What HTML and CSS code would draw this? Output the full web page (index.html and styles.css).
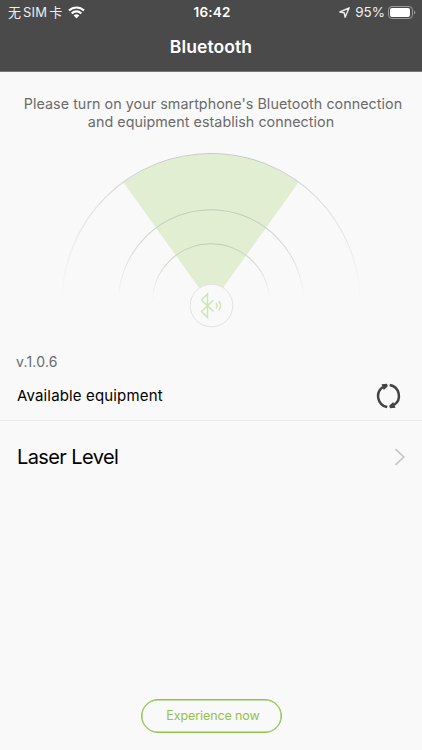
FILE: index.html
```html
<!DOCTYPE html>
<html lang="en">
<head>
    <meta charset="UTF-8">
    <meta name="viewport" content="width=device-width, initial-scale=1.0">
    <title>Bluetooth</title>
    <link rel="stylesheet" href="styles.css">
</head>
<body>
    <header class="header">
        <div class="status-bar">
            <div class="status-left">
                <span class="carrier">无<span class="sim">SIM</span>卡</span>
                <svg class="wifi" width="17" height="13" viewBox="0 0 17 13">
                    <g fill="none" stroke="#fff" stroke-width="2.1">
                        <path d="M1 4.6a10.7 10.7 0 0 1 15 0"/>
                        <path d="M3.7 7.4a6.8 6.8 0 0 1 9.6 0"/>
                    </g>
                    <path d="M8.5 12.4L5.7 9.6a4 4 0 0 1 5.6 0z" fill="#fff"/>
                </svg>
            </div>
            <span class="time">16:42</span>
            <div class="status-right">
                <svg width="11" height="11" viewBox="0 0 11 11">
                    <path d="M10.2 .8L.9 5l4.3.8.9 4.4z" fill="none" stroke="#eee" stroke-width="1.4" stroke-linejoin="round"/>
                </svg>
                <span class="percent">95%</span>
                <svg width="28" height="13" viewBox="0 0 28 13">
                    <rect x=".5" y=".5" width="24" height="12" rx="3.4" fill="none" stroke="#9b9b9b"/>
                    <rect x="2" y="2" width="20" height="9" rx="2" fill="#fff"/>
                    <path d="M26 4.5c1.8.6 1.8 3.4 0 4z" fill="#9b9b9b"/>
                </svg>
            </div>
        </div>
        <h1 class="title">Bluetooth</h1>
    </header>

    <main class="content">
        <div class="hint">
            <p>Please turn on your smartphone's Bluetooth connection</p>
            <p class="hint-end">and equipment establish connection</p>
        </div>

        <svg class="radar" width="422" height="200" viewBox="0 0 422 200">
            <defs>
                <linearGradient id="fade-lg" gradientUnits="userSpaceOnUse" x1="0" y1="13" x2="0" y2="160">
                    <stop offset="0" stop-color="#c4cabd"/>
                    <stop offset=".25" stop-color="#dadada"/>
                    <stop offset="1" stop-color="#f9f9f9"/>
                </linearGradient>
                <linearGradient id="fade-md" gradientUnits="userSpaceOnUse" x1="0" y1="69" x2="0" y2="160">
                    <stop offset="0" stop-color="#c0cab5"/>
                    <stop offset=".25" stop-color="#d0d5cb"/>
                    <stop offset="1" stop-color="#f9f9f9"/>
                </linearGradient>
                <linearGradient id="fade-sm" gradientUnits="userSpaceOnUse" x1="0" y1="103" x2="0" y2="160">
                    <stop offset="0" stop-color="#c0cab5"/>
                    <stop offset=".25" stop-color="#d0d5cb"/>
                    <stop offset="1" stop-color="#f9f9f9"/>
                </linearGradient>
            </defs>
            <path d="M211 164.500L123.500 42.500A149 149 0 0 1 298.500 42.500z" fill="#e1eed2"/>
            <g fill="none" stroke-width="1.1">
                <path d="M62 162.500a149 149 0 0 1 298 0" stroke="url(#fade-lg)"/>
                <path d="M118.500 162.200a92.500 92.500 0 0 1 185 0" stroke="url(#fade-md)"/>
                <path d="M152.500 162.200a58.500 58.500 0 0 1 117 0" stroke="url(#fade-sm)"/>
            </g>
            <circle cx="211.500" cy="165.500" r="21.300" fill="#f9f9f9" stroke="#e2e2e2"/>
            <g fill="none" stroke="#cfe5b4" stroke-width="1.500">
                <path d="M201.500 160l6-6v23.500l-6-6L213.500 160M201.500 160l12 11.500"/>
                <path d="M216 163q2 2.700 0 5.400M218.800 161q3.600 4.700 0 9.400"/>
            </g>
        </svg>

        <p class="version">v.1.0.6</p>

        <div class="section-head">
            <h2 class="section-title">Available equipment</h2>
            <svg class="refresh" width="26" height="26" viewBox="0 0 26 26">
                <g fill="none" stroke="#444" stroke-width="2.5">
                    <path d="M11.300 24A11 11 0 0 1 7 4"/>
                    <path d="M13.700 2A11 11 0 0 1 18 22"/>
                </g>
                <path d="M5.500 1.200L11 .8l.8 2.400-4 3.800zM19.500 24.800L14 25.200l-.8-2.400 4-3.800z" fill="#444"/>
            </svg>
        </div>

        <div class="device">
            <span class="device-name">Laser Level</span>
            <svg width="12" height="18" viewBox="0 0 12 18">
                <path d="M1.5 1.2L9.8 9l-8.300 7.800" fill="none" stroke="#c6c6c6" stroke-width="1.7"/>
            </svg>
        </div>
    </main>

    <footer class="footer">
        <button class="experience-btn">Experience now</button>
    </footer>
</body>
</html>
```
FILE: styles.css
```css
* {
    box-sizing: border-box;
}
body {
    margin: 0;
    height: 750px;
    display: flex;
    flex-direction: column;
    font-family: Inter, "Noto Sans CJK SC", sans-serif;
    background-color: #f9f9f9;
    overflow: hidden;
}
h1, h2, p {
    margin: 0;
    font-weight: 400;
}
svg {
    display: block;
    flex: none;
}
.header {
    height: 72px;
    background-color: #4a4a4a;
    border-bottom: 1px solid #777;
    color: #fff;
}
.status-bar {
    display: grid;
    grid-template-columns: 1fr auto 1fr;
    align-items: center;
    height: 24px;
    padding: 0 6px 0 8px;
    font-size: 13.5px;
    line-height: 24px;
}
.status-left, .status-right {
    display: flex;
    align-items: center;
}
.carrier {
    display: flex;
    gap: 2px;
    font-size: 13px;
    color: #eee;
}
.sim {
    font-size: 13px;
    letter-spacing: 0.2px;
}
.wifi {
    margin-left: 5.5px;
}
.time {
    font-weight: 600;
    letter-spacing: 0.2px;
}
.status-right {
    justify-content: flex-end;
}
.percent {
    margin: 0 3px 0 5px;
    color: #eee;
}
.title {
    font-size: 17.5px;
    font-weight: 600;
    letter-spacing: 0.1px;
    line-height: 46px;
    text-align: center;
}
.hint {
    padding: 23px 0 0 4px;
    font-size: 14.3px;
    line-height: 17.5px;
    letter-spacing: 0.05px;
    text-align: center;
    color: #6b6b6b;
}
.hint-end {
    padding-right: 4px;
}
.radar {
    margin-top: 10px;
}
.version {
    margin-top: 11px;
    padding-left: 16px;
    font-size: 14px;
    line-height: 22px;
    letter-spacing: 0.2px;
    color: #6b6b6b;
}
.section-head {
    display: flex;
    align-items: center;
    justify-content: space-between;
    height: 48px;
    padding: 0 20px 2px 17px;
    border-bottom: 1px solid #e9e9e9;
}
.section-title {
    font-size: 15px;
    letter-spacing: 0.15px;
}
.device {
    display: flex;
    align-items: center;
    justify-content: space-between;
    height: 72px;
    padding: 0 16px 0 17px;
}
.device-name {
    font-size: 20px;
    letter-spacing: -0.6px;
}
.footer {
    margin-top: auto;
    padding-bottom: 17px;
    text-align: center;
}
.experience-btn {
    width: 141px;
    height: 34px;
    padding: 0 0 2px 4px;
    font-family: inherit;
    font-size: 12.5px;
    letter-spacing: -0.1px;
    color: #93c24d;
    background: none;
    border: 1px solid #93c24d;
    border-radius: 17px;
    box-shadow: inset 0 0 0 0.5px #93c24d;
}
```
